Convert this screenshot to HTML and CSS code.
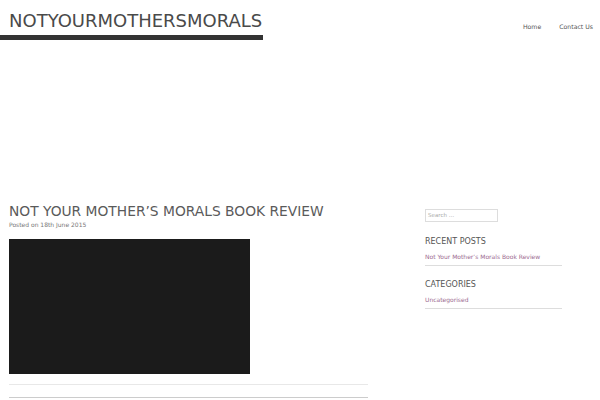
FILE: index.html
```html
<!DOCTYPE html>
<html>
<head>
<meta charset="utf-8">
<link rel="stylesheet" href="styles.css">
</head>
<body>
<header class="site-header">
  <div class="branding"><span class="site-title">NOTYOURMOTHERSMORALS</span></div>
  <nav class="nav">
    <a href="#">Home</a>
    <a href="#">Contact Us</a>
  </nav>
</header>
<div class="spacer"></div>
<div class="main">
  <article class="content">
    <h1 class="entry-title">NOT YOUR MOTHER’S MORALS BOOK REVIEW</h1>
    <div class="meta">Posted on 18th June 2015</div>
    <div class="video"></div>
    <div class="rule1"></div>
    <div class="rule2"></div>
  </article>
  <aside class="sidebar">
    <div class="search">Search …</div>
    <h2 class="widget-title">RECENT POSTS</h2>
    <div class="widget-item"><a href="#">Not Your Mother’s Morals Book Review</a></div>
    <h2 class="widget-title">CATEGORIES</h2>
    <div class="widget-item"><a href="#">Uncategorised</a></div>
  </aside>
</div>
</body>
</html>
```
FILE: styles.css
```css
html, body {
  margin: 0;
  padding: 0;
  background: #fff;
  font-family: "DejaVu Sans", sans-serif;
  color: #555;
}
.site-header {
  display: flex;
  justify-content: space-between;
  align-items: flex-start;
  height: 40px;
}
.branding {
  width: 254px;
  padding-left: 9px;
  height: 35px;
  border-bottom: 5px solid #333;
  box-sizing: content-box;
}
.site-title {
  display: block;
  font-size: 18px;
  line-height: 19px;
  padding-top: 11px;
  color: #4a4a4a;
  white-space: nowrap;
}
.nav {
  display: flex;
  gap: 18px;
  padding-top: 23px;
  padding-right: 7px;
}
.nav a {
  font-size: 6.2px;
  color: #555;
  text-decoration: none;
}
.spacer {
  height: 162px;
}
.main {
  display: flex;
  padding-left: 9px;
}
.content {
  width: 359px;
}
.entry-title {
  margin: 0;
  font-weight: normal;
  font-size: 13.8px;
  line-height: 18px;
  color: #5a5a5a;
  white-space: nowrap;
}
.meta {
  font-size: 6px;
  color: #777;
  margin-top: 1px;
  height: 11px;
}
.video {
  width: 241px;
  height: 135px;
  background: #1b1b1b;
  margin-top: 7px;
}
.rule1 {
  height: 1px;
  background: #e8e8e8;
  margin-top: 10px;
}
.rule2 {
  height: 1px;
  background: #ccc;
  margin-top: 12px;
}
.sidebar {
  margin-left: 57px;
  width: 137px;
  padding-top: 7px;
}
.search {
  width: 69px;
  height: 11px;
  border: 1px solid #ddd;
  font-size: 5.5px;
  line-height: 11px;
  color: #aaa;
  padding-left: 2px;
  box-sizing: content-box;
}
.widget-title {
  margin: 13px 0 0 0;
  font-weight: normal;
  font-size: 8px;
  line-height: 11px;
  color: #555;
}
.search + .widget-title {
  margin-top: 14px;
}
.widget-item {
  font-size: 6px;
  line-height: 10px;
  margin-top: 5px;
  padding-bottom: 3px;
  border-bottom: 1px solid #ddd;
}
.widget-item a {
  color: #9c6b90;
  text-decoration: none;
}
```
